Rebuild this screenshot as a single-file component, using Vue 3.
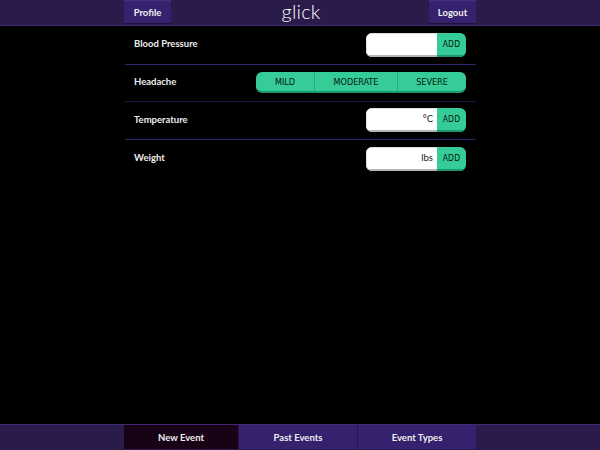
<script setup>
const rows = [
  { label: 'Blood Pressure', unit: '' },
  { label: 'Headache', options: ['MILD', 'MODERATE', 'SEVERE'] },
  { label: 'Temperature', unit: '°C' },
  { label: 'Weight', unit: 'lbs' }
]
const tabs = ['New Event', 'Past Events', 'Event Types']
</script>

<template>
  <div class="page">
    <header class="bar top">
      <div class="inner">
        <a class="nav">Profile</a>
        <span class="logo">glick</span>
        <a class="nav">Logout</a>
      </div>
    </header>
    <main class="list">
      <div v-for="row in rows" :key="row.label" class="row">
        <span class="label">{{ row.label }}</span>
        <div v-if="row.options" class="seg">
          <button v-for="o in row.options" :key="o" class="opt">{{ o }}</button>
        </div>
        <div v-else class="entry">
          <div class="field">{{ row.unit }}</div>
          <button class="add">ADD</button>
        </div>
      </div>
    </main>
    <footer class="bar bottom">
      <div class="inner tabs">
        <a v-for="(t, i) in tabs" :key="t" class="tab" :class="{ active: i === 0 }">{{ t }}</a>
      </div>
    </footer>
  </div>
</template>

<style>
html, body { margin: 0; background: #000; }
</style>

<style scoped>
.page {
  width: 600px; height: 450px; background: #000; display: flex; flex-direction: column;
  font-family: "Lato", "DejaVu Sans", sans-serif; overflow: hidden; opacity: 0.999;
}
.bar { background: #2a1b4b; flex: none; }
.top { height: 25px; border-bottom: 1px solid #3f2a78; }
.bottom { height: 25px; border-top: 1px solid #3f2a78; }
.inner { width: 351px; margin-left: 125px; height: 100%; display: flex; justify-content: space-between; align-items: stretch; }
.nav {
  width: 47px; background: #35216d; color: #eee; font-size: 9.5px; font-weight: 700;
  display: flex; align-items: center; justify-content: center; border-bottom: 1px solid #1c1236; border-top: 1px solid #45307f; box-sizing: border-box; height: 24px;
}
.nav:first-child { margin-left: -1px; }
.logo { color: #fff; font-family: "Lato", sans-serif; font-size: 20px; font-weight: 300; line-height: 23px; letter-spacing: 0.2px; margin-left: 2px; }
.list { flex: 1; width: 351px; margin-left: 125px; }
.row {
  height: 37px; display: flex; align-items: center; justify-content: space-between;
  padding: 0 10px 1px 9px; border-bottom: 1px solid #35216d; box-sizing: border-box;
}
.row:first-child { height: 39px; }
.row:nth-child(2) { border-bottom-color: #21143f; }
.row:nth-child(3) { height: 38px; }
.row:last-child { border-bottom: 0; height: 38px; }
.label { color: #eee; font-size: 9.5px; font-weight: 700; margin-top: -2px; }
.entry { display: flex; width: 100px; height: 24px; border-radius: 6px; overflow: hidden; }
.field {
  width: 71px; background: #fff; border-bottom: 2px solid #b5b5b5; box-shadow: inset 1px 1px 0 #ddd; box-sizing: border-box; color: #222;
  font-size: 9.5px; text-align: right; padding-right: 4px; line-height: 22px;
}
.add {
  width: 29px; padding: 0; border: 0; border-bottom: 2px solid #1a9a6c; background: #35cc97; color: #06140f;
  font-family: "DejaVu Sans", sans-serif; font-stretch: condensed; font-size: 8.5px; letter-spacing: 0.2px;
}
.seg { display: flex; width: 210px; height: 21px; border-radius: 6px; overflow: hidden; border-bottom: 2px solid #1a9a6c; box-sizing: border-box; }
.opt {
  padding: 0; border: 0; border-left: 1px solid #2aa97d; background: #35cc97; color: #06140f;
  font-family: "DejaVu Sans", sans-serif; font-stretch: condensed; font-size: 9px;
}
.opt:nth-child(1) { width: 58px; border-left: 0; }
.opt:nth-child(2) { width: 83px; }
.opt:nth-child(3) { width: 69px; }
.tabs { justify-content: stretch; margin-left: 124px; width: 352px; }
.tab {
  background: #35216d; color: #eee; font-size: 9.5px; font-weight: 700;
  display: flex; align-items: center; justify-content: center; border-left: 1px solid #241648;
  box-sizing: border-box; height: 24px;
}
.tab:nth-child(1) { width: 114px; }
.tab:nth-child(2) { width: 119px; }
.tab:nth-child(3) { width: 119px; }
.tab.active { background: #170315; border-left: 0; }
</style>
